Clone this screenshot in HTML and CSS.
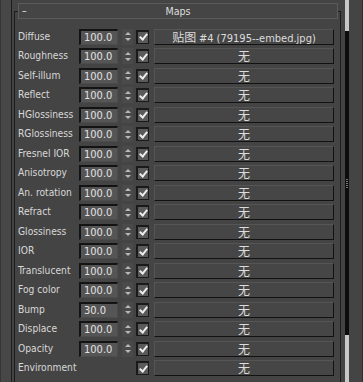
FILE: index.html
```html
<!DOCTYPE html>
<html lang="en">
<head>
    <meta charset="UTF-8">
    <title>Maps</title>
    <link rel="stylesheet" href="styles.css">
</head>
<body>
    <div class="frame">
        <div class="gutter"></div>
        <div class="rollout">
            <div class="group">
                <div class="head"><span class="dash">–</span><span class="title">Maps</span></div>
                <div class="rows">
                    <div class="row"><span class="name">Diffuse</span><span class="num">100.0</span><span class="spin"><i class="up"></i><i class="down"></i></span><span class="chk"></span><span class="map">贴图 <span class="lat">#4 (79195--embed.jpg)</span></span></div>
                    <div class="row"><span class="name">Roughness</span><span class="num">100.0</span><span class="spin"><i class="up"></i><i class="down"></i></span><span class="chk"></span><span class="map">无</span></div>
                    <div class="row"><span class="name">Self-illum</span><span class="num">100.0</span><span class="spin"><i class="up"></i><i class="down"></i></span><span class="chk"></span><span class="map">无</span></div>
                    <div class="row"><span class="name">Reflect</span><span class="num">100.0</span><span class="spin"><i class="up"></i><i class="down"></i></span><span class="chk"></span><span class="map">无</span></div>
                    <div class="row"><span class="name">HGlossiness</span><span class="num">100.0</span><span class="spin"><i class="up"></i><i class="down"></i></span><span class="chk"></span><span class="map">无</span></div>
                    <div class="row"><span class="name">RGlossiness</span><span class="num">100.0</span><span class="spin"><i class="up"></i><i class="down"></i></span><span class="chk"></span><span class="map">无</span></div>
                    <div class="row"><span class="name">Fresnel IOR</span><span class="num">100.0</span><span class="spin"><i class="up"></i><i class="down"></i></span><span class="chk"></span><span class="map">无</span></div>
                    <div class="row"><span class="name">Anisotropy</span><span class="num">100.0</span><span class="spin"><i class="up"></i><i class="down"></i></span><span class="chk"></span><span class="map">无</span></div>
                    <div class="row"><span class="name">An. rotation</span><span class="num">100.0</span><span class="spin"><i class="up"></i><i class="down"></i></span><span class="chk"></span><span class="map">无</span></div>
                    <div class="row"><span class="name">Refract</span><span class="num">100.0</span><span class="spin"><i class="up"></i><i class="down"></i></span><span class="chk"></span><span class="map">无</span></div>
                    <div class="row"><span class="name">Glossiness</span><span class="num">100.0</span><span class="spin"><i class="up"></i><i class="down"></i></span><span class="chk"></span><span class="map">无</span></div>
                    <div class="row"><span class="name">IOR</span><span class="num">100.0</span><span class="spin"><i class="up"></i><i class="down"></i></span><span class="chk"></span><span class="map">无</span></div>
                    <div class="row"><span class="name">Translucent</span><span class="num">100.0</span><span class="spin"><i class="up"></i><i class="down"></i></span><span class="chk"></span><span class="map">无</span></div>
                    <div class="row"><span class="name">Fog color</span><span class="num">100.0</span><span class="spin"><i class="up"></i><i class="down"></i></span><span class="chk"></span><span class="map">无</span></div>
                    <div class="row"><span class="name">Bump</span><span class="num">30.0</span><span class="spin"><i class="up"></i><i class="down"></i></span><span class="chk"></span><span class="map">无</span></div>
                    <div class="row"><span class="name">Displace</span><span class="num">100.0</span><span class="spin"><i class="up"></i><i class="down"></i></span><span class="chk"></span><span class="map">无</span></div>
                    <div class="row"><span class="name">Opacity</span><span class="num">100.0</span><span class="spin"><i class="up"></i><i class="down"></i></span><span class="chk"></span><span class="map">无</span></div>
                    <div class="row"><span class="name">Environment</span><span class="skip"></span><span class="chk"></span><span class="map">无</span></div>
                </div>
            </div>
        </div>
        <div class="scroll">
            <div class="track"></div>
            <div class="thumb"><span class="grip"></span></div>
            <div class="track rest"></div>
        </div>
        <div class="strip"></div>
    </div>
</body>
</html>
```

FILE: styles.css
```css
body{
    margin: 0;
    background: #444444;
    font-family: "DejaVu Sans Condensed", "DejaVu Sans", sans-serif;
    font-stretch: condensed;
    font-size: 10.2px;
    color: #d8d8d8;
    overflow: hidden;
}
.frame{
    display: flex;
    width: 363px;
    height: 382px;
}
.gutter{
    width: 11px;
    border-right: 1px solid #1c1c1c;
    background: #474747 linear-gradient(#363636, #363636) left top / 1px 1px;
    background-repeat: repeat-y;
    background-size: 1px 9px;
}
.rollout{
    width: 327px;
    padding-left: 2px;
}
.group{
    margin-top: 11px;
    height: 371px;
    box-sizing: border-box;
    border: 1px solid #1c1c1c;
    border-bottom: none;
}
.head{
    display: grid;
    align-items: center;
    height: 16px;
    box-sizing: border-box;
    margin: -9px 2px 0 3px;
    border: 1px solid #5b5b5b;
    background: #454545;
    line-height: 14px;
}
.head span{
    grid-area: 1 / 1;
}
.dash{
    justify-self: start;
    padding-left: 3px;
    color: #e6e6e6;
}
.title{
    justify-self: center;
    font-size: 10.6px;
    color: #dedede;
}
.rows{
    padding-top: 9.5px;
}
.row{
    display: flex;
    align-items: flex-start;
    height: 19.5px;
    padding-left: 3px;
}
.name{
    width: 61px;
    line-height: 16px;
    white-space: nowrap;
}
.num{
    width: 39px;
    height: 16px;
    box-sizing: border-box;
    margin-right: 4px;
    padding-left: 3px;
    border-top: 2px solid #131313;
    border-left: 2px solid #131313;
    border-right: 1px solid #4c4c4c;
    border-bottom: 1px solid #4c4c4c;
    background: #555555;
    font-size: 11px;
    line-height: 13px;
    color: #e2e2e2;
}
.spin{
    display: flex;
    flex-direction: column;
    justify-content: space-around;
    align-items: center;
    width: 11px;
    height: 16px;
    box-sizing: border-box;
    margin-right: 3px;
    padding: 2px 0;
    background: #4a4a4a;
}
.spin i{
    width: 0;
    height: 0;
    border-left: 3px solid transparent;
    border-right: 3px solid transparent;
}
.spin .up{
    border-bottom: 3px solid #b8b8b8;
}
.spin .down{
    border-top: 3px solid #b8b8b8;
}
.chk{
    display: flex;
    justify-content: center;
    align-items: center;
    width: 13px;
    height: 14px;
    box-sizing: border-box;
    margin-top: 1px;
    margin-right: 5px;
    border: 1px solid #1a1a1a;
    border-top-width: 2px;
    border-left-width: 2px;
    background: #5a5a5a;
}
.chk::after{
    content: "";
    width: 3px;
    height: 6px;
    margin-top: -2px;
    border-right: 2px solid #ececec;
    border-bottom: 2px solid #ececec;
    transform: rotate(40deg);
}
.skip{
    width: 57px;
}
.map{
    width: 180px;
    height: 16px;
    box-sizing: border-box;
    border: 1px solid #121212;
    border-top-color: #555555;
    border-left-color: #555555;
    background: #464646;
    text-align: center;
    font-family: "Noto Sans CJK SC", sans-serif;
    font-size: 12px;
    line-height: 14px;
    color: #dcdcdc;
    white-space: nowrap;
}
.lat{
    font-family: "DejaVu Sans Condensed", "DejaVu Sans", sans-serif;
    font-size: 11px;
}
.scroll{
    display: flex;
    flex-direction: column;
    width: 4px;
    margin-left: 4px;
}
.track{
    height: 31px;
    background: #c8c8c8;
}
.track.rest{
    flex: 1;
}
.thumb{
    display: flex;
    justify-content: center;
    align-items: center;
    height: 304px;
    background: #0d0d0d;
}
.grip{
    width: 2px;
    height: 9px;
    background: repeating-linear-gradient(#777777 0 1px, transparent 1px 2px);
}
.strip{
    width: 14px;
    background: #444444 linear-gradient(#2e2e2e, #2e2e2e) right top / 1px 1px;
    background-repeat: repeat-y;
    background-size: 1px 10px;
}
```
